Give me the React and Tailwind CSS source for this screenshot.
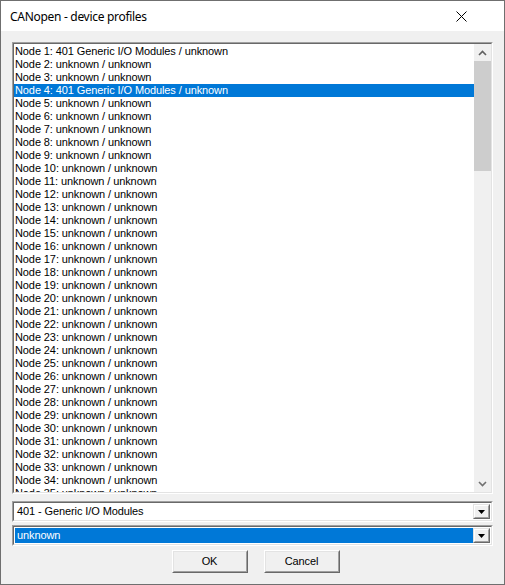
import React from 'react';

const rows = Array.from({ length: 35 }, (_, i) => {
  const n = i + 1;
  const profile = n === 1 || n === 4 ? '401 Generic I/O Modules' : 'unknown';
  return { n, label: `Node ${n}: ${profile} / unknown` };
});

const Sunken = ({ className = '', children }) => (
  <div className={`border border-t-[#a0a0a0] border-l-[#a0a0a0] border-r-white border-b-white ${className}`}>
    <div className="h-full border border-t-[#696969] border-l-[#696969] border-r-[#e3e3e3] border-b-[#e3e3e3]">
      {children}
    </div>
  </div>
);

const DropButton = () => (
  <div className="w-[17px] h-full border border-t-[#e3e3e3] border-l-[#e3e3e3] border-r-[#696969] border-b-[#696969] bg-[#f0f0f0]">
    <div className="h-full flex items-center justify-center border border-t-white border-l-white border-r-[#a0a0a0] border-b-[#a0a0a0]">
      <svg width="7" height="4" viewBox="0 0 7 4"><path d="M0 0h7L3.5 4z" fill="#000" /></svg>
    </div>
  </div>
);

const Combo = ({ text, selected }) => (
  <Sunken className="h-[21px]">
    <div className="h-full flex items-stretch bg-white p-px">
      <div className={`flex-1 flex items-center pl-[2px] ${selected ? 'bg-[#0078d7] text-white' : 'text-black'}`}>
        {text}
      </div>
      <DropButton />
    </div>
  </Sunken>
);

const Button = ({ children }) => (
  <div className="w-[76px] h-[23px] border border-t-white border-l-white border-r-[#696969] border-b-[#696969] bg-[#f0f0f0]">
    <div className="h-full flex items-center justify-center border border-t-[#e3e3e3] border-l-[#e3e3e3] border-r-[#a0a0a0] border-b-[#a0a0a0] text-black">
      {children}
    </div>
  </div>
);

export default function App() {
  return (
    <div className="w-[505px] h-[585px] flex flex-col border border-[#6f6f6f] bg-[#f0f0f0] text-[11px] leading-[13px] tracking-[-0.1px] font-['Liberation_Sans',Arial,sans-serif] overflow-hidden">
      <div className="h-[30px] shrink-0 bg-white flex items-center justify-between pl-[9px] pr-[37px]">
        <span className="text-[12px] text-black font-['Noto_Sans',sans-serif] tracking-[-0.3px]">CANopen - device profiles</span>
        <svg width="11" height="11" viewBox="0 0 11 11">
          <path d="M0.5 0.5L10.5 10.5M10.5 0.5L0.5 10.5" stroke="#000" strokeWidth="1" />
        </svg>
      </div>

      <div className="flex-1 flex flex-col px-[11px] pt-[11px]">
        <Sunken className="h-[452px]">
          <div className="h-full flex bg-white">
            <div className="flex-1 overflow-hidden pt-px">
              {rows.map((r) => (
                <div
                  key={r.n}
                  className={`h-[13px] pl-[1px] whitespace-nowrap ${r.n === 4 ? 'bg-[#0078d7] text-white' : 'text-black'}`}
                >
                  {r.label}
                </div>
              ))}
            </div>
            <div className="w-[17px] flex flex-col bg-[#f0f0f0]">
              <div className="h-[17px] flex items-center justify-center">
                <svg width="9" height="6" viewBox="0 0 9 6"><path d="M1 5L4.5 1.5L8 5" fill="none" stroke="#606060" strokeWidth="1.6" /></svg>
              </div>
              <div className="h-[110px] bg-[#cdcdcd]" />
              <div className="flex-1" />
              <div className="h-[17px] flex items-center justify-center">
                <svg width="9" height="6" viewBox="0 0 9 6"><path d="M1 1L4.5 4.5L8 1" fill="none" stroke="#707070" strokeWidth="1.6" /></svg>
              </div>
            </div>
          </div>
        </Sunken>

        <div className="mt-[7px] flex flex-col gap-[3px]">
          <Combo text="401 - Generic I/O Modules" />
          <Combo text="unknown" selected />
        </div>

        <div className="mt-[4px] flex justify-center gap-[16px] pl-[6px]">
          <Button>OK</Button>
          <Button>Cancel</Button>
        </div>
      </div>
    </div>
  );
}
